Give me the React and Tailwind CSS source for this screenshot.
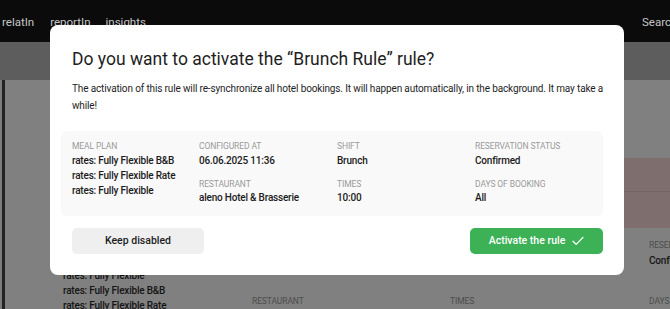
import React from "react";

const font = { fontFamily: "Roboto, 'Liberation Sans', sans-serif" };

function Label({ children, className = "" }) {
  return (
    <div className={"text-[8.5px] leading-[12px] tracking-[-0.1px] text-[#9a9a9a] uppercase whitespace-nowrap " + className}>
      {children}
    </div>
  );
}

function Value({ children }) {
  return (
    <div className="text-[10px] leading-[15px] tracking-[-0.2px] font-medium text-[#1c1c1c] whitespace-nowrap">
      {children}
    </div>
  );
}

function BgLabel({ children, className = "" }) {
  return (
    <div className={"text-[8.5px] leading-[12px] tracking-[-0.1px] text-[#4d4d4d] whitespace-nowrap " + className}>
      {children}
    </div>
  );
}

function BgValue({ children }) {
  return (
    <div className="text-[10px] leading-[15px] tracking-[-0.2px] font-medium text-[#151515] whitespace-nowrap">
      {children}
    </div>
  );
}

export default function App() {
  return (
    <div className="relative w-[670px] h-[309px] overflow-hidden bg-[#808080]" style={font}>
      {/* nav */}
      <div className="h-[42px] bg-[#0b0b0b] flex items-end pb-[12px] text-[11.5px] leading-[16px] text-[#c6c6c6] relative">
        <span className="ml-[2px]">relatIn</span>
        <span className="ml-[16px]">reportIn</span>
        <span className="ml-[15px]">insights</span>
        <span className="absolute left-[642px] bottom-[12px]">Search</span>
      </div>
      {/* header band */}
      <div className="h-[38px] bg-[#5d5d5d]" />
      {/* content */}
      <div className="flex min-h-[229px]">
        <div className="w-[2px] shrink-0 bg-[#7c7c7c]" />
        <div className="w-[3px] shrink-0 bg-[#232323]" />
        <div className="flex-1 min-w-0 flex flex-col">
          <div className="h-[78px] shrink-0" />
          <div className="ml-[200px] h-[34px] shrink-0 bg-[#7e6e6e] border-b border-[#736363]" />
          <div className="ml-[200px] h-[36px] shrink-0 bg-[#7e6e6e]" />
          <div className="grid grid-cols-[189px_198px_199px_1fr] pl-[58px] pt-[11px] shrink-0">
            <div className="flex flex-col">
              <BgLabel>MEAL PLAN</BgLabel>
              <div className="mt-[2px]" />
              <BgValue>rates: Fully Flexible Rate</BgValue>
              <BgValue>rates: Fully Flexible</BgValue>
              <BgValue>rates: Fully Flexible B&amp;B</BgValue>
              <BgValue>rates: Fully Flexible Rate</BgValue>
            </div>
            <div className="flex flex-col pt-[56px]">
              <BgLabel>RESTAURANT</BgLabel>
            </div>
            <div className="flex flex-col pt-[56px]">
              <BgLabel>TIMES</BgLabel>
            </div>
            <div className="flex flex-col">
              <BgLabel>RESERVATION STATUS</BgLabel>
              <div className="mt-[2px]" />
              <BgValue>Confirmed</BgValue>
              <BgLabel className="mt-[27px]">DAYS OF BOOKING</BgLabel>
            </div>
          </div>
        </div>
      </div>

      {/* modal */}
      <div className="absolute left-[50px] top-[25px] w-[574px] h-[250px] bg-white rounded-[8px] pl-[11px] pr-[21px] pt-[22px] text-[#1a1a1a]">
        <h2 className="pl-[11px] text-[17.5px] leading-[24px] font-normal text-[#1e1e1e] whitespace-nowrap">
          Do you want to activate the “Brunch Rule” rule?
        </h2>
        <p className="pl-[11px] w-[560px] mt-[9px] text-[10px] leading-[17px] tracking-[-0.14px] text-[#1e1e1e] whitespace-nowrap">
          The activation of this rule will re-synchronize all hotel bookings. It will happen automatically, in the background. It may take a
          <br />
          while!
        </p>
        <div className="mt-[17px] h-[85px] bg-[#f9f9f9] rounded-[6px] pl-[11px] pt-[9px] grid grid-cols-[127px_138px_138px_1fr]">
          <div className="flex flex-col">
            <Label>MEAL PLAN</Label>
            <div className="mt-[1px]" />
            <Value>rates: Fully Flexible B&amp;B</Value>
            <Value>rates: Fully Flexible Rate</Value>
            <Value>rates: Fully Flexible</Value>
          </div>
          <div className="flex flex-col">
            <Label>CONFIGURED AT</Label>
            <div className="mt-[1px]" />
            <Value>06.06.2025 11:36</Value>
            <Label className="mt-[10px]">RESTAURANT</Label>
            <Value>aleno Hotel &amp; Brasserie</Value>
          </div>
          <div className="flex flex-col">
            <Label>SHIFT</Label>
            <div className="mt-[1px]" />
            <Value>Brunch</Value>
            <Label className="mt-[10px]">TIMES</Label>
            <Value>10:00</Value>
          </div>
          <div className="flex flex-col">
            <Label>RESERVATION STATUS</Label>
            <div className="mt-[1px]" />
            <Value>Confirmed</Value>
            <Label className="mt-[10px]">DAYS OF BOOKING</Label>
            <Value>All</Value>
          </div>
        </div>
        <div className="mt-[12px] flex justify-between pl-[11px]">
          <button className="w-[132px] h-[26px] rounded-[5px] bg-[#efefef] text-[10.5px] font-medium text-[#1e1e1e]">
            Keep disabled
          </button>
          <button className="w-[133px] h-[26px] rounded-[5px] bg-[#3cb156] text-[10.5px] font-medium text-white flex items-center justify-center gap-[7px]">
            Activate the rule
            <svg width="12" height="10" viewBox="0 0 12 10" fill="none" stroke="white" strokeWidth="1.3" strokeLinecap="round" strokeLinejoin="round">
              <path d="M1 5.2 L4.2 8.4 L11 1.4" />
            </svg>
          </button>
        </div>
      </div>
    </div>
  );
}
